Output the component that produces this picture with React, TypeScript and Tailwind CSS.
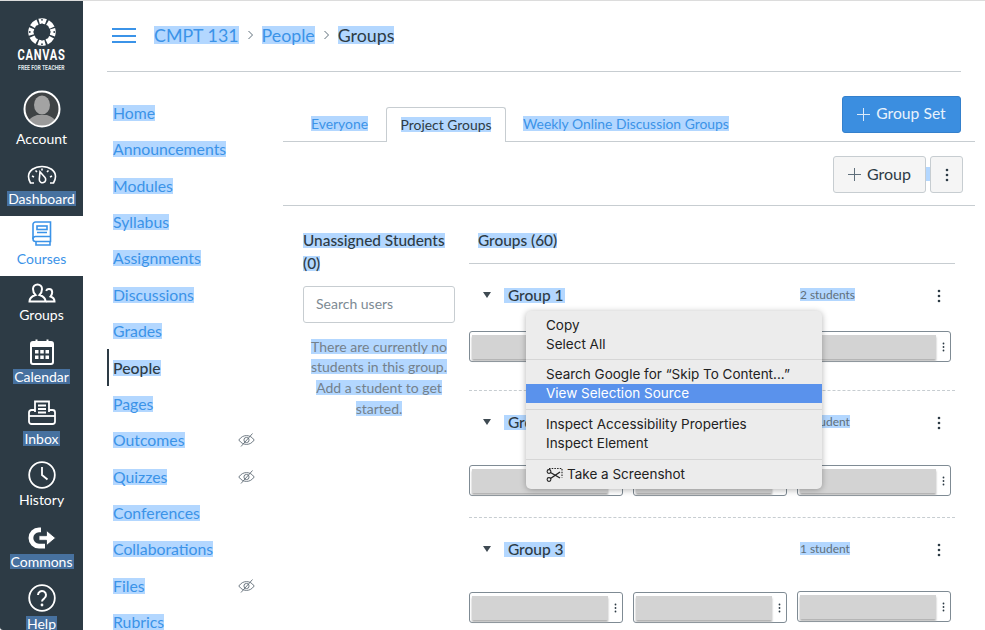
import React from "react";

const Sel = ({ className = "", children }: { className?: string; children: React.ReactNode }) => (
  <span className={"bg-[#b3d7ff] " + className}>{children}</span>
);

const LogoIcon = () => (
  <svg width="28" height="28" viewBox="0 0 28 28" className="block">
    <circle cx="14" cy="14" r="11" fill="none" stroke="#fff" strokeWidth="5.4" strokeDasharray="6.9 1.74" transform="rotate(-17 14 14)" />
    {[0, 45, 90, 135, 180, 225, 270, 315].map((a) => (
      <circle key={a} cx="14" cy="6.6" r="1.15" fill="#2d3b45" transform={`rotate(${a} 14 14)`} />
    ))}
    {[0, 90, 180, 270].map((a) => (
      <circle key={a} cx="14" cy="1.8" r="0.9" fill="#2d3b45" transform={`rotate(${a} 14 14)`} />
    ))}
  </svg>
);

const Avatar = () => (
  <svg width="38" height="38" viewBox="0 0 38 38" className="block">
    <defs>
      <clipPath id="av"><circle cx="19" cy="19" r="17" /></clipPath>
    </defs>
    <circle cx="19" cy="19" r="17" fill="#3f4345" />
    <g clipPath="url(#av)">
      <ellipse cx="19" cy="15" rx="8" ry="9.5" fill="#a3a3a3" />
      <path d="M3 38c0-8 6-11 11-13h10c5 2 11 5 11 13z" fill="#9a9a9a" />
    </g>
    <circle cx="19" cy="19" r="17.5" fill="none" stroke="#fff" strokeWidth="2" />
  </svg>
);

const Dash = () => (
  <svg width="30" height="20" viewBox="0 0 30 20" fill="none" stroke="#fff" strokeWidth="1.6" className="block">
    <path d="M7 18H3.500C2 15.500 1.500 13.500 1.500 11.500 1.500 5.500 7.500 1.500 15 1.500s13.500 4 13.500 10c0 2-.5 4-2 6.500H23" />
    <path d="M15 6.500l3 7a3.200 3.200 0 1 1-6 0z" transform="rotate(-18 15 13)" fill="#2d3b45" />
    <path d="M5 11l2 1M8.500 5.500l1.500 1.500M15 3.500v2M21.500 5.500L20 7M25 11l-2 1" />
  </svg>
);

const Book = () => (
  <svg width="20" height="26" viewBox="0 0 20 26" fill="none" stroke="#3b93e8" strokeWidth="1.6" className="block">
    <path d="M3.500 1h15v19.500h-15A2.500 2.500 0 0 1 1 18V3.500A2.500 2.500 0 0 1 3.500 1z" />
    <path d="M1 18a2.500 2.500 0 0 1 2.500-2.500h15" />
    <rect x="5" y="5" width="10" height="3.500" />
    <path d="M5 11.500h10M4 20.500V24h14v-3.500" />
  </svg>
);

const Grp = () => (
  <svg width="28" height="20" viewBox="0 0 28 20" fill="none" stroke="#fff" strokeWidth="2" className="block">
    <path d="M1.500 18.500c0-3.500 1.500-5 6-6.500-2-2-2.500-4-2.500-6 0-2.500 2-4.500 4.500-4.500S14 3.500 14 6c0 2-.5 4-2.500 6 4.500 1.500 6 3 6 6.500z" />
    <path d="M18 18.500h8.500c0-3-1-4-4-5 1.200-1.500 1.700-2.800 1.700-4.200 0-2-1.400-3.300-3.200-3.300-1.300 0-2.400.7-2.900 1.800" />
  </svg>
);

const Cal = () => (
  <svg width="24" height="26" viewBox="0 0 24 26" className="block">
    <rect x="1" y="3" width="22" height="22" rx="2" fill="none" stroke="#fff" strokeWidth="2" />
    <rect x="1" y="3" width="22" height="5" fill="#fff" />
    <rect x="5.500" y="0.500" width="2" height="5" fill="#fff" />
    <rect x="16.500" y="0.500" width="2" height="5" fill="#fff" />
    {[11, 16.5].map((y) =>
      [5, 10.25, 15.5].map((x) => <rect key={`${x}-${y}`} x={x} y={y} width="3.500" height="3.500" fill="#fff" />)
    )}
  </svg>
);

const Inbox = () => (
  <svg width="28" height="26" viewBox="0 0 28 26" fill="none" stroke="#fff" strokeWidth="1.8" className="block">
    <path d="M7 12V1.500h14V12" />
    <path d="M10 5.500h8M10 9h8M10 12.500h8" />
    <path d="M7 10H3.500A2.500 2.500 0 0 0 1 12.500v9A2.500 2.500 0 0 0 3.500 24h21a2.500 2.500 0 0 0 2.500-2.500v-9A2.500 2.500 0 0 0 24.500 10H21" />
    <path d="M1 16h26" />
  </svg>
);

const Clock = () => (
  <svg width="28" height="28" viewBox="0 0 28 28" fill="none" stroke="#fff" className="block">
    <circle cx="14" cy="14" r="12.800" strokeWidth="1.800" />
    <path d="M14 6v8l5.500 4.500" strokeWidth="1.800" />
  </svg>
);

const Commons = () => (
  <svg width="28" height="24" viewBox="0 0 28 24" className="block">
    <path d="M13 1.500H11a10.500 10.500 0 0 0 0 21h6v-4.800h-6a5.700 5.700 0 0 1 0-11.400h2z" fill="#fff" />
    <path d="M11 9.700h7.500V4.500L27.500 12l-9 7.500v-5.200H11z" fill="#fff" stroke="#2d3b45" strokeWidth="0.800" />
  </svg>
);

const Help = () => (
  <svg width="28" height="28" viewBox="0 0 28 28" fill="none" stroke="#fff" className="block">
    <circle cx="14" cy="14" r="12.800" strokeWidth="1.800" />
    <path d="M10 11a4 4 0 1 1 6.300 3.300c-1.500 1-2.300 1.700-2.300 3.200" strokeWidth="2" />
    <circle cx="14" cy="21" r="1.400" fill="#fff" stroke="none" />
  </svg>
);

const Eye = () => (
  <svg width="17" height="16" viewBox="0 0 17 16" fill="none" stroke="#5f6b75" strokeWidth="0.9" className="block">
    <path d="M.8 8C3 5 5.500 3.600 8.500 3.600S14 5 16.200 8C14 11 11.500 12.400 8.500 12.400S3 11 .8 8z" />
    <circle cx="8.500" cy="8" r="2.600" />
    <path d="M3 14.500L14.500 1.500" />
  </svg>
);

const Kebab = ({ size = "md" }: { size?: "md" | "sm" }) =>
  size === "md" ? (
    <svg width="4" height="14" viewBox="0 0 4 14" fill="#2d3b45" className="block">
      <circle cx="2" cy="2" r="1.300" /><circle cx="2" cy="7" r="1.300" /><circle cx="2" cy="12" r="1.300" />
    </svg>
  ) : (
    <svg width="3" height="10" viewBox="0 0 3 10" fill="#2d3b45" className="block">
      <circle cx="1.500" cy="1.500" r="0.900" /><circle cx="1.500" cy="5" r="0.900" /><circle cx="1.500" cy="8.500" r="0.900" />
    </svg>
  );

const Plus = ({ color }: { color: string }) => (
  <svg width="13" height="13" viewBox="0 0 13 13" stroke={color} strokeWidth="1" className="block">
    <path d="M6.500 0v13M0 6.500h13" />
  </svg>
);

const Caret = () => (
  <svg width="8" height="6" viewBox="0 0 8 6" fill="#3f4a52" className="block">
    <path d="M0 0h8L4 6z" />
  </svg>
);

const Chevron = () => (
  <svg width="7" height="10" viewBox="0 0 7 10" fill="none" stroke="#5f6f7b" strokeWidth="1" className="block mx-[8px]">
    <path d="M1.500 1l4 4-4 4" />
  </svg>
);

const Scissors = () => (
  <svg width="17" height="17" viewBox="0 0 17 17" fill="none" stroke="#222" strokeWidth="1.100" className="block">
    <path d="M3 2.500h13v9" strokeDasharray="1.500 1.200" />
    <circle cx="3" cy="5.500" r="1.900" />
    <circle cx="3" cy="13.500" r="1.900" />
    <path d="M4.500 6.500L14 12M4.500 12.500L14 6" strokeWidth="1.400" />
  </svg>
);

const rail = [
  { h: "h-[60px]", mb: "mb-[4px]", icon: <Dash />, label: "Dashboard", sel: true },
  { h: "h-[60px]", mb: "mb-[2px]", icon: <Book />, label: "Courses", active: true },
  { h: "h-[56px]", mb: "mb-[2px]", icon: <Grp />, label: "Groups" },
  { h: "h-[62px]", mb: "mb-[2px]", icon: <Cal />, label: "Calendar", sel: true },
  { h: "h-[62px]", mb: "mb-[3px]", icon: <Inbox />, label: "Inbox", sel: true },
  { h: "h-[61px]", mb: "mb-[1px]", icon: <Clock />, label: "History" },
  { h: "h-[62px]", mb: "mb-[2px]", icon: <Commons />, label: "Commons", sel: true },
  { h: "h-[62px]", mb: "mb-[2px]", icon: <Help />, label: "Help", sel: true },
];

const courseNav = [
  { label: "Home" },
  { label: "Announcements" },
  { label: "Modules" },
  { label: "Syllabus" },
  { label: "Assignments" },
  { label: "Discussions" },
  { label: "Grades" },
  { label: "People", active: true },
  { label: "Pages" },
  { label: "Outcomes", hidden: true },
  { label: "Quizzes", hidden: true },
  { label: "Conferences" },
  { label: "Collaborations" },
  { label: "Files", hidden: true },
  { label: "Rubrics" },
];

const Card = ({ className = "" }: { className?: string }) => (
  <div className={"w-[154px] h-[31px] shrink-0 border border-[#7f8b94] rounded-[3px] bg-white flex items-center pl-[2px] " + className}>
    <div className="w-[136px] h-[24px] bg-[#d3d3d3] shadow-[0_2px_2px_#b0b0b0]" />
    <div className="flex-1 flex justify-center">
      <Kebab size="sm" />
    </div>
  </div>
);

const Cards = ({ className, lift }: { className: string; lift?: boolean }) => (
  <div className={"flex gap-[10px] " + className}>
    <Card />
    <Card />
    <Card className={lift ? "-mt-px" : ""} />
  </div>
);

const GroupHead = ({ name, count }: { name: string; count: string }) => (
  <div className="h-[30px] flex items-center">
    <div className="w-[35px] pl-[14px]">
      <Caret />
    </div>
    <div className="w-[296px] text-[15.5px] leading-[15px] text-[#2d3b45] font-medium flex">
      <Sel className="pr-[1px] leading-[15px]">&nbsp;{name}</Sel>
    </div>
    <div className="w-[137px] text-[11.9px] text-[#5f6f7b] flex pb-[1px]">
      <Sel className="leading-[13px]">{count}</Sel>
    </div>
    <div className="pt-[1px]">
      <Kebab />
    </div>
  </div>
);

const Sep = ({ h = "h-[11px]" }: { h?: string }) => (
  <div className={h + " flex items-center"}>
    <div className="w-full h-px bg-[#d6d6d6]" />
  </div>
);
const MI = ({ children, active }: { children: React.ReactNode; active?: boolean }) => (
  <div className={"h-[19px] pl-[20px] flex items-center leading-[19px] " + (active ? "bg-[#5a92ec] text-white" : "")}>{children}</div>
);

const emptyLines = ["There are currently no", "students in this group.", "Add a student to get", "started."];

export default function App() {
  return (
    <div className="relative w-[985px] h-[630px] overflow-hidden bg-white border-t border-[#dcdcdc] flex font-['Lato',sans-serif]">
      <aside className="w-[83px] shrink-0 bg-[#2d3b45] flex flex-col text-white text-[14px] leading-[20px] overflow-visible rounded-bl-[3px]">
        <div className="h-[88px] shrink-0 flex flex-col items-center pt-[17px]">
          <LogoIcon />
          <div className="mt-[1px] h-[16px] text-[15px] leading-[16px] font-bold font-['Roboto',sans-serif] tracking-[1px] scale-x-[0.74] whitespace-nowrap">CANVAS</div>
          <div className="h-[9px] text-[8px] leading-[9px] font-bold text-[#dfe3e6] font-['Roboto',sans-serif] scale-x-[0.64] whitespace-nowrap">FREE FOR TEACHER</div>
        </div>
        <div className="h-[67px] shrink-0 flex flex-col items-center justify-end pb-[7px]">
          <div className="mb-[1px]"><Avatar /></div>
          <span>Account</span>
        </div>
        {rail.map((r) => (
          <div
            key={r.label}
            className={r.h + " shrink-0 flex flex-col items-center justify-end pb-[7px] " + (r.active ? "bg-white text-[#3b93e8]" : "")}
          >
            <div className={r.mb}>{r.icon}</div>
            <div className={"h-[20px] flex items-center " + (r.sel ? "pb-[2px]" : "")}>
              <span className={r.sel ? "bg-[#47719f] px-[1px] leading-[15px]" : ""}>{r.label}</span>
            </div>
          </div>
        ))}
      </aside>
      <main className="flex-1 min-w-0 flex flex-col">
        <header className="h-[71px] shrink-0 mx-[24px] border-b border-[#c7cdd1] flex items-center pl-[5px] pb-[1px]">
          <div className="w-[24px] h-[15px] flex flex-col justify-between mr-[18px]">
            <div className="h-[2px] bg-[#3b93e8]" />
            <div className="h-[2px] bg-[#3b93e8]" />
            <div className="h-[2px] bg-[#3b93e8]" />
          </div>
          <div className="flex items-center text-[17.8px] text-[#3b93e8] pb-[2px]">
            <Sel className="leading-[18px]">CMPT 131</Sel>
            <Chevron />
            <Sel className="leading-[18px]">People</Sel>
            <Chevron />
            <Sel className="leading-[18px] text-[#2d3b45]">Groups</Sel>
          </div>
        </header>
        <div className="flex-1 min-h-0 flex">
          <nav className="w-[200px] shrink-0 pl-[24px] pt-[22.6px] text-[15.8px] text-[#3b93e8]">
            {courseNav.map((n) => (
              <div key={n.label} className={"h-[36.4px] flex items-center justify-between pr-[28px] " + (n.active ? "border-l-2 border-[#2d3b45] pl-[4px] font-medium text-[#2d3b45]" : "pl-[6px]")}>
                <Sel className="leading-[16px]">{n.label}</Sel>
                {n.hidden && <Eye />}
              </div>
            ))}
          </nav>
          <section className="w-[692px] shrink-0 flex flex-col">
            <div className="h-[70px] shrink-0 border-b border-[#c7cdd1] flex items-end justify-between pt-[24px] pr-[14px]">
              <div className="flex items-end text-[13.9px] text-[#3b93e8] -mb-px">
                <div className="h-[35px] pl-[28px] pr-[18px] pb-[1px] flex items-center border-b border-[#c7cdd1]"><Sel className="leading-[15px]">Everyone</Sel></div>
                <div className="h-[35px] w-[120px] pb-[2px] flex items-center justify-center bg-white border border-b-0 border-[#c7cdd1] rounded-t-[3px] text-[#2d3b45]"><Sel className="leading-[15px]">Project Groups</Sel></div>
                <div className="h-[35px] pl-[17px] pb-[1px] flex items-center border-b border-[#c7cdd1]"><Sel className="leading-[15px]">Weekly Online Discussion Groups</Sel></div>
              </div>
              <div className="self-start w-[119px] h-[37px] mb-[8px] pb-[1px] bg-[#3b8ee0] border border-[#3480cc] rounded-[3px] flex items-center justify-center gap-[6px] text-[15.7px] text-[#e8f2fc]">
                <Plus color="#dbeafa" />
                <span>Group Set</span>
              </div>
            </div>
            <div className="h-[64px] shrink-0 border-b border-[#c7cdd1] flex items-start justify-end pt-[14px] pr-[12px]">
              <div className="w-[93px] h-[37px] pb-[1px] bg-[#f5f5f5] border border-[#c7cdd1] rounded-[3px] flex items-center justify-center gap-[6px] text-[16px] text-[#2d3b45]">
                <Plus color="#5f6f7b" />
                <span>Group</span>
              </div>
              <div className="w-[4px] h-[14px] mt-[11px] bg-[#b3d7ff]" />
              <div className="w-[33px] h-[37px] bg-[#f5f5f5] border border-[#c7cdd1] rounded-[3px] flex items-center justify-center">
                <Kebab />
              </div>
            </div>
            <div className="flex-1 min-h-0 flex pl-[20px] pt-[23px]">
              <div className="w-[152px] shrink-0 mr-[14px]">
                <div className="text-[15.4px] font-medium text-[#2d3b45] flex flex-col items-start">
                  <div className="h-[23px] flex items-center"><Sel className="leading-[15px] whitespace-nowrap">Unassigned Students</Sel></div>
                  <div className="h-[23px] flex items-center"><Sel className="leading-[15px]">(0)</Sel></div>
                </div>
                <div className="mt-[11px] h-[37px] pb-[2px] border border-[#c7cdd1] rounded-[3px] flex items-center pl-[12px] text-[14px] text-[#7d8a93]">Search users</div>
                <div className="mt-[13px] text-[14px] text-[#73818c]">
                  {emptyLines.map((l) => (
                    <div key={l} className="h-[20.6px] flex items-center justify-center"><Sel className="leading-[15px]">{l}</Sel></div>
                  ))}
                </div>
              </div>
              <div className="w-[486px] shrink-0">
                <div className="h-[35px] border-b border-[#c7cdd1] pl-[9px] flex items-start text-[15.4px] font-medium text-[#2d3b45]">
                  <div className="h-[23px] flex items-center"><Sel className="leading-[15px]">Groups (60)</Sel></div>
                </div>
                <div className="h-[127px] pt-[16px] border-b border-dashed border-[#c7cdd1]">
                  <GroupHead name="Group 1" count="2 students" />
                  <Cards className="mt-[21px]" />
                </div>
                <div className="h-[127px] pt-[16px] border-b border-dashed border-[#c7cdd1]">
                  <GroupHead name="Group 2" count="1 student" />
                  <Cards className="mt-[28px]" />
                </div>
                <div className="pt-[16px]">
                  <GroupHead name="Group 3" count="1 student" />
                  <Cards className="mt-[28px]" lift />
                </div>
              </div>
            </div>
          </section>
        </div>
      </main>
      <div className="absolute left-[526px] top-[310px] w-[296px] h-[178px] pt-[5px] bg-[#ececec] rounded-[5px] shadow-[0_1px_6px_rgba(0,0,0,0.3)] text-[13.5px] text-[#222] font-['Inter',sans-serif]">
        <MI>Copy</MI>
        <MI>Select All</MI>
        <Sep />
        <MI>Search Google for “Skip To Content...”</MI>
        <MI active>View Selection Source</MI>
        <Sep h="h-[12px]" />
        <MI>Inspect Accessibility Properties</MI>
        <MI>Inspect Element</MI>
        <Sep h="h-[12px]" />
        <MI><span className="mr-[4px]"><Scissors /></span>Take a Screenshot</MI>
      </div>
    </div>
  );
}
